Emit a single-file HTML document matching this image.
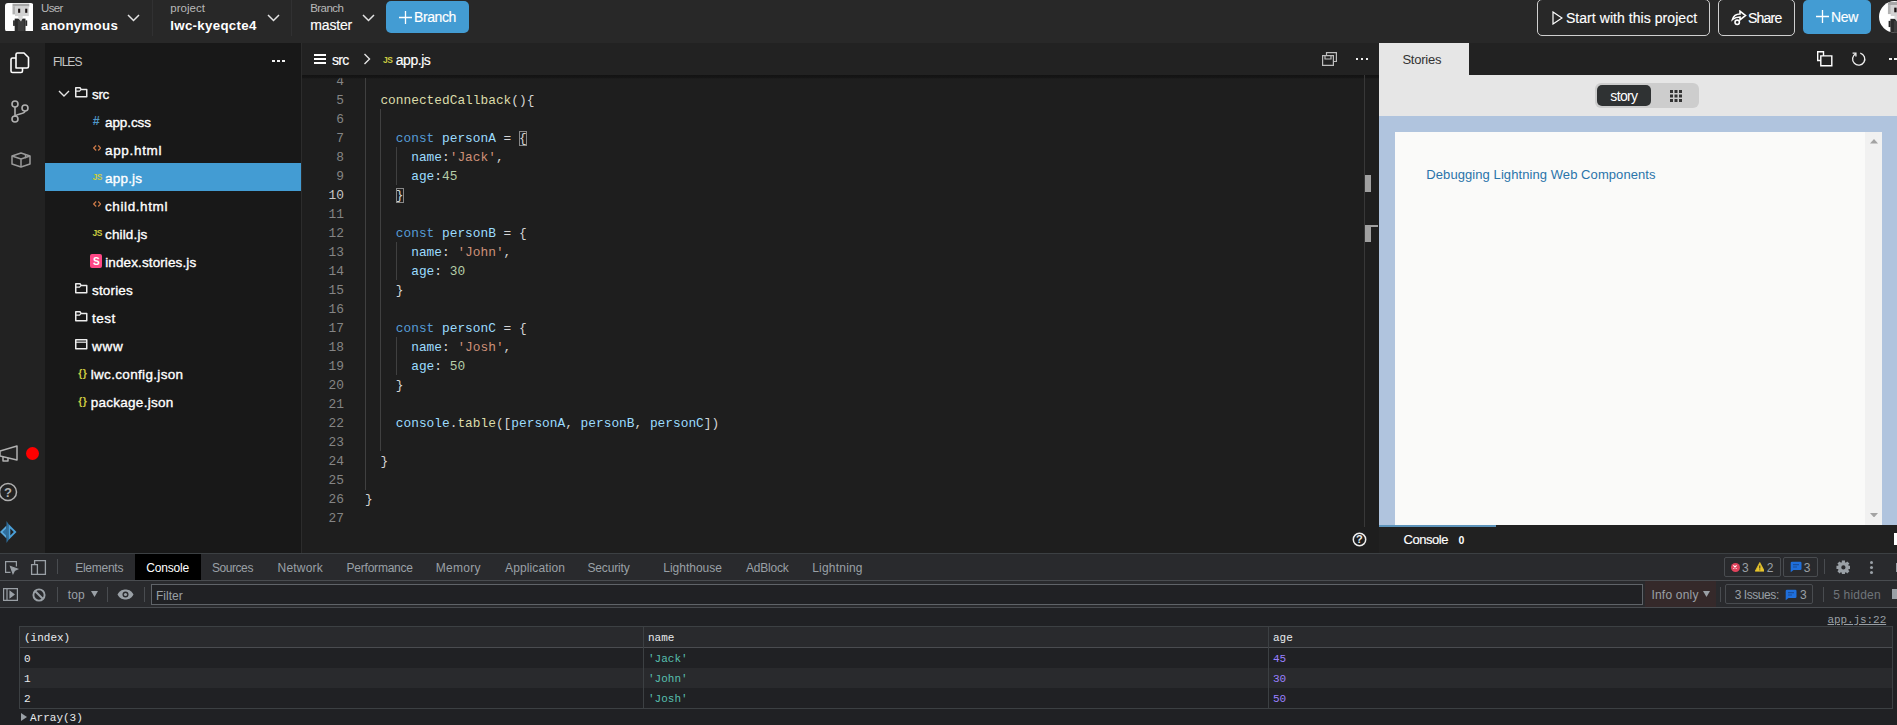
<!DOCTYPE html>
<html><head><meta charset="utf-8"><title>lwc-kyeqcte4</title>
<style>
*{box-sizing:border-box;margin:0;padding:0}
html,body{width:1897px;height:725px;overflow:hidden;background:#1e1e1e;font-family:"Liberation Sans",sans-serif;color:#fff}
.abs{position:absolute}
.tx{position:absolute;white-space:pre;line-height:1}
#top{position:absolute;left:0;top:0;width:1897px;height:43px;background:#282828}
#top .sep{position:absolute;top:0;width:1px;height:36px;background:#313132}
.btn{position:absolute;border-radius:5px}
.btn.blue{background:#439cd3}
.btn.out{border:1px solid #cfcfcf}
#iconbar{position:absolute;left:0;top:43px;width:45px;height:510px;background:#222}
#files{position:absolute;left:45px;top:43px;width:256px;height:510px;background:#181818}
#files .row{position:absolute;left:0;width:256px;height:28px}
#files .row.sel{background:#439cd3}
#split{position:absolute;left:301px;top:43px;width:1px;height:510px;background:#2c2c2c}
#editor{position:absolute;left:302px;top:43px;width:1077px;height:510px;background:#222}
#code{background:#1e1e1e;position:absolute;left:0;top:32px;width:1077px;height:478px;overflow:hidden;font-family:"Liberation Mono",monospace;font-size:12.83px;color:#d4d4d4}
#code .ln{position:absolute;left:0;width:42px;text-align:right;color:#858585;height:19px;line-height:19px}
#code .cl{position:absolute;left:63px;height:19px;line-height:19px;white-space:pre}
.k{color:#569cd6}.v{color:#9cdcfe}.s{color:#ce9178}.n{color:#b5cea8}.f{color:#dcdcaa}
.br{outline:1px solid #888;outline-offset:-1px}
.guide{position:absolute;width:1px;background:#404040}
#right{position:absolute;left:1379px;top:43px;width:518px;height:510px;background:#222}
#dev{position:absolute;left:0;top:553px;width:1897px;height:172px;background:#202124}
</style></head><body>
<div id="top">
<svg class="abs" style="left:4.900px;top:2.600px" width="28.500" height="28.800" viewBox="0 0 28.500 28.800"><rect width="28.500" height="28.800" rx="3" fill="#fff"/><rect x="7.500" y="0.700" width="16.800" height="2.900" fill="#a6a6a6"/><rect x="7.500" y="3.400" width="2.600" height="8" fill="#b2b2b2"/><rect x="10" y="3.400" width="13.800" height="9.700" fill="#d2d2d2"/><rect x="13.100" y="5.700" width="2.100" height="4.100" fill="#1c1414"/><rect x="20.200" y="5.700" width="2.100" height="4.100" fill="#1c1414"/><rect x="9.700" y="15.600" width="10.800" height="13.200" fill="#2a2a2a"/><rect x="8.100" y="17.400" width="1.800" height="5.500" fill="#2a2a2a"/><rect x="20.400" y="17.400" width="1.800" height="5.500" fill="#2a2a2a"/><rect x="12.800" y="17.500" width="6.600" height="11.300" fill="#3d3d3d"/><path d="M13.300 13.100h4.400v2.500l-1.700 2.800-2.700-3z" fill="#d8d8d8"/></svg>
<span id="t1" class="tx" style="left:40.94px;top:2.77px;font-size:11.5px;color:#b8b8b8;letter-spacing:-0.600px;">User</span>
<span id="t2" class="tx" style="left:41.00px;top:19.14px;font-size:13.3px;color:#fff;font-weight:bold;letter-spacing:0.270px;">anonymous</span>
<svg class="abs" style="left:127px;top:14px" width="13" height="8" viewBox="0 0 13 8"><path d="M1 1 L6.500 6.500 L12 1" fill="none" stroke="#e4e4e4" stroke-width="1.5"/></svg>
<div class="sep" style="left:152px"></div>
<span id="t3" class="tx" style="left:170.22px;top:2.77px;font-size:11.5px;color:#b8b8b8;letter-spacing:0.030px;">project</span>
<span id="t4" class="tx" style="left:170.22px;top:19.14px;font-size:13.3px;color:#fff;font-weight:bold;letter-spacing:0.311px;">lwc-kyeqcte4</span>
<svg class="abs" style="left:267px;top:14px" width="13" height="8" viewBox="0 0 13 8"><path d="M1 1 L6.500 6.500 L12 1" fill="none" stroke="#e4e4e4" stroke-width="1.5"/></svg>
<div class="sep" style="left:291px"></div>
<span id="t5" class="tx" style="left:310.22px;top:2.77px;font-size:11.5px;color:#b8b8b8;letter-spacing:-0.576px;">Branch</span>
<span id="t6" class="tx" style="left:310.22px;top:18.35px;font-size:14px;color:#fff;letter-spacing:-0.144px;-webkit-text-stroke:.15px #fff;">master</span>
<svg class="abs" style="left:362px;top:14px" width="13" height="8" viewBox="0 0 13 8"><path d="M1 1 L6.500 6.500 L12 1" fill="none" stroke="#e4e4e4" stroke-width="1.5"/></svg>
<div class="btn blue" style="left:386px;top:1px;width:83px;height:32px"></div>
<svg class="abs" style="left:399px;top:11px" width="13" height="13" viewBox="0 0 13 13"><path d="M6.500 0v13M0 6.500h13" stroke="#fff" stroke-width="1.3"/></svg>
<span id="t7" class="tx" style="left:414.10px;top:9.85px;font-size:14px;color:#fff;letter-spacing:-0.432px;-webkit-text-stroke:.15px #fff;">Branch</span>
<div class="btn out" style="left:1537px;top:-1px;width:173px;height:37px"></div>
<svg class="abs" style="left:1552px;top:11px" width="11" height="14" viewBox="0 0 11 14"><path d="M1 1 L10 7 L1 13 Z" fill="none" stroke="#fff" stroke-width="1.2"/></svg>
<span id="t8" class="tx" style="left:1565.94px;top:11.35px;font-size:14px;color:#fff;letter-spacing:0.057px;-webkit-text-stroke:.15px #fff;">Start with this project</span>
<div class="btn out" style="left:1718px;top:-1px;width:77px;height:37px"></div>
<svg class="abs" style="left:1731px;top:10px" width="16" height="16" viewBox="0 0 16 16" fill="none" stroke="#fff" stroke-width="1.600"><path d="M1.500 9.500C2.500 5.500 5.500 4 9 4V1.200L14.500 5.500 9 9.800V7C6 7 3.500 7.800 1.500 9.500Z"/><circle cx="6.200" cy="12.300" r="2.200"/></svg>
<span id="t9" class="tx" style="left:1748.00px;top:11.35px;font-size:14px;color:#fff;letter-spacing:-0.765px;-webkit-text-stroke:.15px #fff;">Share</span>
<div class="btn blue" style="left:1803px;top:0;width:68px;height:34px"></div>
<svg class="abs" style="left:1816px;top:10px" width="13" height="13" viewBox="0 0 13 13"><path d="M6.500 0v13M0 6.500h13" stroke="#fff" stroke-width="1.3"/></svg>
<span id="t10" class="tx" style="left:1830.88px;top:10.15px;font-size:14px;color:#fff;letter-spacing:-0.270px;-webkit-text-stroke:.15px #fff;">New</span>
<svg class="abs" style="left:1878.800px;top:1px" width="18.200" height="31.600" viewBox="0 0 16.100 28"><circle cx="14" cy="14" r="14" fill="#fff"/><clipPath id="cc"><circle cx="14" cy="14" r="14"/></clipPath><g clip-path="url(#cc)"><g transform="translate(0.400,0.200)"><rect x="7.500" y="0.700" width="16.800" height="2.900" fill="#a6a6a6"/><rect x="7.500" y="3.400" width="2.600" height="8" fill="#b2b2b2"/><rect x="10" y="3.400" width="13.800" height="9.700" fill="#d2d2d2"/><rect x="13.100" y="5.700" width="2.100" height="4.100" fill="#1c1414"/><rect x="20.200" y="5.700" width="2.100" height="4.100" fill="#1c1414"/><rect x="9.700" y="15.600" width="10.800" height="13.200" fill="#2a2a2a"/><rect x="8.100" y="17.400" width="1.800" height="5.500" fill="#2a2a2a"/><rect x="20.400" y="17.400" width="1.800" height="5.500" fill="#2a2a2a"/><rect x="12.800" y="17.500" width="6.600" height="11.300" fill="#3d3d3d"/><path d="M13.300 13.100h4.400v2.500l-1.700 2.800-2.700-3z" fill="#d8d8d8"/></g></g></svg>
</div>
<div id="iconbar">
  <svg class="abs" style="left:8px;top:8px" width="24" height="24" viewBox="0 0 24 24" fill="none" stroke="#fff" stroke-width="1.6" stroke-linejoin="round"><path d="M8 17V3.500a1.500 1.500 0 0 1 1.500-1.500H16l4.500 4.500V15.500a1.500 1.500 0 0 1-1.500 1.500H8Z"/><path d="M8 7H4.500A1.500 1.500 0 0 0 3 8.500V20a1.500 1.500 0 0 0 1.500 1.500H13a1.500 1.500 0 0 0 1.500-1.500v-3"/></svg>
  <svg class="abs" style="left:8px;top:55.500px" width="24" height="26" viewBox="0 0 24 26" fill="none" stroke="#b0b0b0" stroke-width="1.6"><circle cx="7" cy="5" r="3"/><circle cx="7" cy="20" r="3"/><circle cx="17" cy="9" r="3"/><path d="M7 8v9M17 12c0 4-10 2-10 6"/></svg>
  <svg class="abs" style="left:10.500px;top:108.500px" width="20" height="16" viewBox="0 0 20 16" fill="none" stroke="#9a9a9a" stroke-width="1.500" stroke-linejoin="round"><path d="M1 4 L10 1 L19 4 V12 L10 15 L1 12 Z"/><path d="M1 4 L10 7 L19 4M10 7V15M14.500 2.500v4"/></svg>
  <svg class="abs" style="left:0;top:400px" width="20" height="20" viewBox="0 0 20 20" fill="none" stroke="#b0b0b0" stroke-width="1.5" stroke-linejoin="round"><path d="M0 8 L17 3 V17 L0 13 Z"/><path d="M3 14v4h5v-3"/></svg>
  <div class="abs" style="left:26px;top:404px;width:13px;height:13px;border-radius:7px;background:#f00"></div>
  <svg class="abs" style="left:-2px;top:439px" width="20" height="20" viewBox="0 0 20 20" fill="none" stroke="#b0b0b0" stroke-width="1.5"><circle cx="10" cy="10" r="8.500"/></svg>
  <svg class="abs" style="left:0;top:478px" width="18" height="22" viewBox="0 0 18 22"><path d="M0 11 L6.500 4.500 V17.500Z" fill="#5aa9dc"/><path d="M2.500 11 L6.500 7 V15Z" fill="#2f6f9f"/><path d="M6.500 0 L8.500 3 V19 L6.500 22Z" fill="#2d6e9e"/><path d="M8.500 3 L16.500 11 L8.500 19 Z" fill="#4a9fd8"/><path d="M10.300 7.500 L13.800 11 L10.300 14.500Z" fill="#222"/></svg>
</div>
<span id="q1" class="tx" style="left:4.00px;top:486.00px;font-size:13px;color:#b0b0b0;font-weight:bold;">?</span>
<div id="files">
  <div class="row" style="top:36px"></div>
  <div class="row" style="top:64px"></div>
  <div class="row" style="top:92px"></div>
  <div class="row sel" style="top:120px"></div>
  <div class="row" style="top:148px"></div>
  <div class="row" style="top:176px"></div>
  <div class="row" style="top:204px"></div>
  <div class="row" style="top:232px"></div>
  <div class="row" style="top:260px"></div>
  <div class="row" style="top:288px"></div>
  <div class="row" style="top:316px"></div>
  <div class="row" style="top:344px"></div>
</div>
<span id="t30" class="tx" style="left:53.00px;top:55.84px;font-size:12px;color:#c4c4c4;letter-spacing:-0.990px;">FILES</span>
<div class="abs" style="left:272.300px;top:59.700px;width:2.500px;height:2.500px;background:#f0f0f0;box-shadow:5px 0 0 #f0f0f0,10px 0 0 #f0f0f0"></div>
<svg class="abs" style="left:58px;top:90px" width="12" height="8" viewBox="0 0 12 8"><path d="M1 1 L6 6 L11 1" fill="none" stroke="#e4e4e4" stroke-width="1.4"/></svg>
<svg class="abs" style="left:75.2px;top:87.4px" width="12.500" height="10.500" viewBox="0 0 12.500 10.500" fill="none" stroke="#ececec" stroke-width="1.500" stroke-linejoin="round"><path d="M0.750 0.750H5L6.200 2.600H11.750V9.750H0.750Z"/><path d="M1 4.100H4.600L5.800 2.700" stroke-width="1.200"/></svg>
<span id="t12" class="tx" style="left:92.00px;top:87.57px;font-size:13.5px;color:#fff;letter-spacing:-0.360px;-webkit-text-stroke:.35px #fff;">src</span>
<span id="i107" class="tx" style="left:92.80px;top:115.42px;font-size:12.5px;color:#4f97c8;font-weight:bold;">#</span>
<span id="t14" class="tx" style="left:105.00px;top:115.57px;font-size:13.5px;color:#fff;letter-spacing:-0.090px;-webkit-text-stroke:.35px #fff;">app.css</span>
<svg class="abs" style="left:93px;top:145px" width="8.400" height="6" viewBox="0 0 8.400 6" fill="none" stroke="#cc7a48" stroke-width="1.200"><path d="M3.200 0.500L0.700 3 3.200 5.500M5.200 0.500L7.700 3 5.200 5.500"/></svg>
<span id="t15" class="tx" style="left:105.00px;top:143.57px;font-size:13.5px;color:#fff;letter-spacing:0.669px;-webkit-text-stroke:.35px #fff;">app.html</span>
<span id="i163" class="tx" style="left:92.60px;top:173.30px;font-size:8.5px;color:#cbcb41;font-weight:bold;letter-spacing:-.6px;">JS</span>
<span id="t17" class="tx" style="left:105.08px;top:171.57px;font-size:13.5px;color:#fff;letter-spacing:0.180px;-webkit-text-stroke:.35px #fff;">app.js</span>
<svg class="abs" style="left:93px;top:201px" width="8.400" height="6" viewBox="0 0 8.400 6" fill="none" stroke="#cc7a48" stroke-width="1.200"><path d="M3.200 0.500L0.700 3 3.200 5.500M5.200 0.500L7.700 3 5.200 5.500"/></svg>
<span id="t18" class="tx" style="left:105.00px;top:199.57px;font-size:13.5px;color:#fff;letter-spacing:0.600px;-webkit-text-stroke:.35px #fff;">child.html</span>
<span id="i219" class="tx" style="left:92.60px;top:229.30px;font-size:8.5px;color:#cbcb41;font-weight:bold;letter-spacing:-.6px;">JS</span>
<span id="t20" class="tx" style="left:105.00px;top:227.57px;font-size:13.5px;color:#fff;letter-spacing:0.154px;-webkit-text-stroke:.35px #fff;">child.js</span>
<span class="abs" style="left:90px;top:254px;width:12px;height:14px;border-radius:2px;background:#ff4785"></span><span id="i247" class="tx" style="left:93.00px;top:257.04px;font-size:10px;color:#fff;font-weight:bold;">S</span>
<span id="t22" class="tx" style="left:105.28px;top:255.57px;font-size:13.5px;color:#fff;letter-spacing:0.108px;-webkit-text-stroke:.35px #fff;">index.stories.js</span>
<svg class="abs" style="left:75.2px;top:283.4px" width="12.500" height="10.500" viewBox="0 0 12.500 10.500" fill="none" stroke="#ececec" stroke-width="1.500" stroke-linejoin="round"><path d="M0.750 0.750H5L6.200 2.600H11.750V9.750H0.750Z"/><path d="M1 4.100H4.600L5.800 2.700" stroke-width="1.200"/></svg>
<span id="t23" class="tx" style="left:92.06px;top:283.57px;font-size:13.5px;color:#fff;letter-spacing:0.150px;-webkit-text-stroke:.35px #fff;">stories</span>
<svg class="abs" style="left:75.2px;top:311.4px" width="12.500" height="10.500" viewBox="0 0 12.500 10.500" fill="none" stroke="#ececec" stroke-width="1.500" stroke-linejoin="round"><path d="M0.750 0.750H5L6.200 2.600H11.750V9.750H0.750Z"/><path d="M1 4.100H4.600L5.800 2.700" stroke-width="1.200"/></svg>
<span id="t24" class="tx" style="left:92.06px;top:311.57px;font-size:13.5px;color:#fff;letter-spacing:0.480px;-webkit-text-stroke:.35px #fff;">test</span>
<svg class="abs" style="left:75.2px;top:339.4px" width="12.500" height="10.500" viewBox="0 0 12.500 10.500" fill="none" stroke="#ececec" stroke-width="1.500" stroke-linejoin="round"><path d="M0.750 0.750H11.750V9.750H0.750Z"/><path d="M0.750 3.200H11.750" stroke-width="1.200"/></svg>
<span id="t25" class="tx" style="left:92.06px;top:339.57px;font-size:13.5px;color:#fff;letter-spacing:0.720px;-webkit-text-stroke:.35px #fff;">www</span>
<span id="i359" class="tx" style="left:78.20px;top:368.11px;font-size:10.5px;color:#cbcb41;font-weight:bold;letter-spacing:.6px;">{}</span>
<span id="t27" class="tx" style="left:90.66px;top:367.57px;font-size:13.5px;color:#fff;letter-spacing:0.334px;-webkit-text-stroke:.35px #fff;">lwc.config.json</span>
<span id="i387" class="tx" style="left:78.20px;top:396.11px;font-size:10.5px;color:#cbcb41;font-weight:bold;letter-spacing:.6px;">{}</span>
<span id="t29" class="tx" style="left:90.66px;top:395.57px;font-size:13.5px;color:#fff;letter-spacing:0.278px;-webkit-text-stroke:.35px #fff;">package.json</span>
<div id="split"></div>
<div id="editor">
  <div id="code">
    <div class="ln" style="top:-3px">4</div><div class="cl" style="top:-3px"> </div>
    <div class="ln" style="top:16px">5</div><div class="cl" style="top:16px">  <span class="f">connectedCallback</span>(){</div>
    <div class="ln" style="top:35px">6</div><div class="cl" style="top:35px"> </div>
    <div class="ln" style="top:54px">7</div><div class="cl" style="top:54px">    <span class="k">const</span> <span class="v">personA</span> = <span class="br">{</span></div>
    <div class="ln" style="top:73px">8</div><div class="cl" style="top:73px">      <span class="v">name</span>:<span class="s">'Jack'</span>,</div>
    <div class="ln" style="top:92px">9</div><div class="cl" style="top:92px">      <span class="v">age</span>:<span class="n">45</span></div>
    <div class="ln" style="top:111px;color:#c6c6c6">10</div><div class="cl" style="top:111px">    <span class="br">}</span></div>
    <div class="ln" style="top:130px">11</div><div class="cl" style="top:130px"> </div>
    <div class="ln" style="top:149px">12</div><div class="cl" style="top:149px">    <span class="k">const</span> <span class="v">personB</span> = {</div>
    <div class="ln" style="top:168px">13</div><div class="cl" style="top:168px">      <span class="v">name</span>: <span class="s">'John'</span>,</div>
    <div class="ln" style="top:187px">14</div><div class="cl" style="top:187px">      <span class="v">age</span>: <span class="n">30</span></div>
    <div class="ln" style="top:206px">15</div><div class="cl" style="top:206px">    }</div>
    <div class="ln" style="top:225px">16</div><div class="cl" style="top:225px"> </div>
    <div class="ln" style="top:244px">17</div><div class="cl" style="top:244px">    <span class="k">const</span> <span class="v">personC</span> = {</div>
    <div class="ln" style="top:263px">18</div><div class="cl" style="top:263px">      <span class="v">name</span>: <span class="s">'Josh'</span>,</div>
    <div class="ln" style="top:282px">19</div><div class="cl" style="top:282px">      <span class="v">age</span>: <span class="n">50</span></div>
    <div class="ln" style="top:301px">20</div><div class="cl" style="top:301px">    }</div>
    <div class="ln" style="top:320px">21</div><div class="cl" style="top:320px"> </div>
    <div class="ln" style="top:339px">22</div><div class="cl" style="top:339px">    <span class="v">console</span>.<span class="f">table</span>([<span class="v">personA</span>, <span class="v">personB</span>, <span class="v">personC</span>])</div>
    <div class="ln" style="top:358px">23</div><div class="cl" style="top:358px"> </div>
    <div class="ln" style="top:377px">24</div><div class="cl" style="top:377px">  }</div>
    <div class="ln" style="top:396px">25</div><div class="cl" style="top:396px"> </div>
    <div class="ln" style="top:415px">26</div><div class="cl" style="top:415px">}</div>
    <div class="ln" style="top:434px">27</div><div class="cl" style="top:434px"> </div>
    <div class="abs" style="left:0;top:0;width:1077px;height:3.500px;background:linear-gradient(#131313,#151515 60%,rgba(30,30,30,0))"></div>
    <div class="guide" style="left:63px;top:3px;height:411.500px"></div>
    <div class="guide" style="left:78px;top:34px;height:342px"></div>
    <div class="guide" style="left:94px;top:72px;height:38px"></div>
    <div class="guide" style="left:94px;top:167px;height:38px"></div>
    <div class="guide" style="left:94px;top:262px;height:38px"></div>
    <div class="abs" style="left:1062px;top:0;width:1px;height:452px;background:#383838"></div>
    <div class="abs" style="left:1063px;top:100px;width:6px;height:17px;background:#a0a0a0"></div>
    <div class="abs" style="left:1063px;top:150px;width:6px;height:17px;background:#a0a0a0"></div>
    <div class="abs" style="left:1063px;top:150px;width:13px;height:2px;background:#a0a0a0"></div>
    <svg class="abs" style="left:1050px;top:457px" width="15" height="15" viewBox="0 0 15 15"><circle cx="7.500" cy="7.500" r="6.200" fill="none" stroke="#eee" stroke-width="1.500"/></svg>
  </div>
</div>
<span id="q2" class="tx" style="left:1356.00px;top:534.29px;font-size:11px;color:#eee;font-weight:bold;">?</span>
<div class="abs" style="left:314px;top:54px;width:12px;height:2px;background:#fff;box-shadow:0 4px 0 #fff,0 8px 0 #fff"></div>
<span id="t32" class="tx" style="left:332.00px;top:52.65px;font-size:14px;color:#fff;letter-spacing:-0.720px;-webkit-text-stroke:.15px #fff;">src</span>
<svg class="abs" style="left:363px;top:53px" width="8" height="12" viewBox="0 0 8 12"><path d="M1.500 1 L6.500 6 L1.500 11" fill="none" stroke="#e4e4e4" stroke-width="1.400"/></svg>
<span id="ijs" class="tx" style="left:383.00px;top:55.80px;font-size:8.5px;color:#cbcb41;font-weight:bold;letter-spacing:-.6px;">JS</span>
<span id="t34" class="tx" style="left:395.78px;top:52.65px;font-size:14px;color:#fff;letter-spacing:-0.468px;-webkit-text-stroke:.15px #fff;">app.js</span>
<svg class="abs" style="left:1322px;top:52px" width="16" height="14" viewBox="0 0 16 14" fill="none" stroke="#bdbdbd" stroke-width="1.200"><path d="M4.500 3.500V0.600h9.900v8.900h-3"/><path d="M0.600 3.600h10.800v9.800h-10.800z"/><path d="M3 3.600v3.400h6v-3.400"/></svg>
<div class="abs" style="left:1355.700px;top:57.700px;width:2.500px;height:2.500px;background:#f0f0f0;box-shadow:5px 0 0 #f0f0f0,10px 0 0 #f0f0f0"></div>
<div id="right">
  <div class="abs" style="left:0;top:0;width:90px;height:32px;background:#e6e6e6"></div>
  <svg class="abs" style="left:438.300px;top:8.300px" width="16" height="16" viewBox="0 0 16 16" fill="none" stroke="#fff" stroke-width="1.400"><path d="M0.700 0.700h5.800v8.800h-5.800z"/><path d="M3.800 4.900h11v9.800h-11z" fill="#222"/></svg>
  <svg class="abs" style="left:472px;top:8px" width="16" height="16" viewBox="0 0 16 16" fill="none" stroke="#f0f0f0" stroke-width="1.300"><path d="M9.280 2.100A6.100 6.100 0 1 1 4.650 2.700"/><path d="M1.600 2.200H4.900V5.500"/></svg>
  <div class="abs" style="left:510px;top:14.700px;width:2.500px;height:2.500px;background:#f0f0f0;box-shadow:5px 0 0 #f0f0f0"></div>
  <div class="abs" style="left:0;top:32px;width:518px;height:41px;background:#e6e6e6"></div>
  <div class="abs" style="left:216px;top:40px;width:104px;height:25px;border-radius:6px;background:#cdcdcd"></div>
  <div class="abs" style="left:218px;top:42px;width:54px;height:21px;border-radius:5px;background:#2f3233"></div>
  <svg class="abs" style="left:291px;top:47px" width="12" height="12" viewBox="0 0 12 12" fill="#333"><path d="M0 0h3v3h-3zM4.500 0h3v3h-3zM9 0h3v3h-3zM0 4.500h3v3h-3zM4.500 4.500h3v3h-3zM9 4.500h3v3h-3zM0 9h3v3h-3zM4.500 9h3v3h-3zM9 9h3v3h-3z"/></svg>
  <div class="abs" style="left:0;top:73px;width:518px;height:409px;background:#b0c4de"></div>
  <div class="abs" style="left:16px;top:89px;width:487px;height:393px;background:#fafaf9"></div>
  <div class="abs" style="left:486px;top:89px;width:17px;height:393px;background:#f1f1f1"></div>
  <svg class="abs" style="left:490.500px;top:96px" width="8" height="4.500" viewBox="0 0 8 4.500"><path d="M0 4.500 L4 0 L8 4.500Z" fill="#a3a3a3"/></svg>
  <svg class="abs" style="left:490.500px;top:469.500px" width="8" height="4.500" viewBox="0 0 8 4.500"><path d="M0 0 L4 4.500 L8 0Z" fill="#a3a3a3"/></svg>
  <div class="abs" style="left:0;top:482px;width:518px;height:28px;background:#212121"></div>
  <div class="abs" style="left:0;top:482px;width:117px;height:2px;background:#5d94bb"></div>
  <div class="abs" style="left:515px;top:490px;width:3px;height:12px;background:#fff"></div>
</div>
<span id="t35" class="tx" style="left:1402.38px;top:52.80px;font-size:13px;color:#333;letter-spacing:-0.240px;">Stories</span>
<span id="t36" class="tx" style="left:1610.28px;top:88.85px;font-size:14px;color:#fff;letter-spacing:-0.630px;">story</span>
<span id="t37" class="tx" style="left:1426.32px;top:167.70px;font-size:13px;color:#2a74aa;letter-spacing:0.076px;">Debugging Lightning Web Components</span>
<span id="t38" class="tx" style="left:1403.48px;top:532.70px;font-size:13px;color:#fff;letter-spacing:-0.450px;-webkit-text-stroke:.15px #fff;">Console</span>
<span id="t39" class="tx" style="left:1458.50px;top:534.81px;font-size:10.5px;color:#fff;font-weight:bold;">0</span>
<div id="dev">
  <div class="abs" style="left:0;top:0;width:1897px;height:1px;background:#3c4043"></div>
  <div class="abs" style="left:0;top:1px;width:1897px;height:26px;background:#292a2d"></div>
  <div class="abs" style="left:0;top:27px;width:1897px;height:1px;background:#494c50"></div>
  <div class="abs" style="left:0;top:28px;width:1897px;height:26px;background:#292a2d"></div>
  <div class="abs" style="left:0;top:54px;width:1897px;height:1px;background:#494c50"></div>
  <div class="abs" style="left:135px;top:1px;width:66px;height:26px;background:#000"></div>
  <svg class="abs" style="left:5px;top:8px" width="14" height="14" viewBox="0 0 14 14" fill="none" stroke="#9aa0a6" stroke-width="1.200"><path d="M5.500 11.400H0.600V0.600H11.400V5.500"/><path d="M5.500 5.500 L12.500 8 L9.500 9.500 L8 12.500Z" fill="#9aa0a6"/></svg>
  <svg class="abs" style="left:30px;top:6px" width="17" height="17" viewBox="0 0 17 17" fill="none" stroke="#9aa0a6" stroke-width="1.300"><path d="M4.600 5V1.600h10.800v13.800H8"/><path d="M1.600 5.600h5.800v9.800H1.600z" fill="#292a2d"/></svg>
  <div class="abs" style="left:57px;top:6px;width:1px;height:15px;background:#494c50"></div>
  <div class="abs" style="left:1724px;top:4px;width:57px;height:20px;border:1px solid #494c50;border-radius:2px"></div>
  <div class="abs" style="left:1730.700px;top:9.500px;width:9.400px;height:9.400px;border-radius:5px;background:#e0435c"></div>
  <svg class="abs" style="left:1733.400px;top:12.200px" width="4" height="4" viewBox="0 0 4 4"><path d="M0.400 0.400L3.600 3.600M3.600 0.400L0.400 3.600" stroke="#fff" stroke-width="1.100"/></svg>
  <svg class="abs" style="left:1754.700px;top:9.300px" width="9.600" height="9.600" viewBox="0 0 11 11"><path d="M5.500 0.500 L10.800 10.500 H0.200Z" fill="#e8c52c" stroke="#e8c52c" stroke-width="0.800" stroke-linejoin="round"/><path d="M5.500 4v3.500M5.500 8.500v1" stroke="#202124" stroke-width="1.100"/></svg>
  <div class="abs" style="left:1783px;top:4px;width:35px;height:20px;border:1px solid #494c50;border-radius:2px"></div>
  <svg class="abs" style="left:1790px;top:8px" width="12" height="12" viewBox="0 0 12 12"><path d="M2 0.800h8.200a1.300 1.300 0 0 1 1.300 1.300v5.600a1.300 1.300 0 0 1-1.300 1.300H3.500L0.700 11.300V2.100A1.300 1.300 0 0 1 2 0.800z" fill="#1f6fdb"/><path d="M3 3.600h6M3 6h4" stroke="#1a4f9c" stroke-width="1.100"/></svg>
  <div class="abs" style="left:1824px;top:6px;width:1px;height:15px;background:#494c50"></div>
  <svg class="abs" style="left:1835.600px;top:6.600px" width="14.800" height="14.800" viewBox="0 0 16 16"><circle cx="8" cy="8" r="4.100" fill="none" stroke="#9aa0a6" stroke-width="3.600"/><g stroke="#9aa0a6" stroke-width="3.400"><path d="M8 0.500v3M8 12.500v3M0.500 8h3M12.500 8h3M2.700 2.700l2 2M11.300 11.300l2 2M2.700 13.300l2-2M11.300 4.700l2-2"/></g></svg>
  <div class="abs" style="left:1870px;top:8px;width:3px;height:3px;border-radius:2px;background:#9aa0a6;box-shadow:0 5px 0 #9aa0a6,0 10px 0 #9aa0a6"></div>
  <div class="abs" style="left:1895.500px;top:10px;width:1.500px;height:9px;background:#9aa0a6"></div>
  <svg class="abs" style="left:3px;top:35px" width="15" height="13" viewBox="0 0 15 13" fill="none" stroke="#9aa0a6" stroke-width="1.200"><path d="M0.600 0.600h13.800v11.800h-13.800z"/><path d="M4 0.600v11.800"/><path d="M7 3.500 L11 6.500 L7 9.500Z" fill="#9aa0a6"/></svg>
  <svg class="abs" style="left:32px;top:35px" width="14" height="14" viewBox="0 0 14 14" fill="none" stroke="#9aa0a6" stroke-width="1.900"><circle cx="7" cy="7" r="5.600"/><path d="M3 3 L11 11"/></svg>
  <div class="abs" style="left:57px;top:34px;width:1px;height:15px;background:#494c50"></div>
  <svg class="abs" style="left:91px;top:38px" width="7" height="6" viewBox="0 0 7 6"><path d="M0 0h7L3.500 6Z" fill="#9aa0a6"/></svg>
  <div class="abs" style="left:107px;top:34px;width:1px;height:15px;background:#494c50"></div>
  <svg class="abs" style="left:117px;top:36px" width="17" height="11" viewBox="0 0 17 11"><path d="M0.500 5.500C3 1 6 0.500 8.500 0.500S14 1 16.500 5.500C14 10 11 10.500 8.500 10.500S3 10 0.500 5.500Z" fill="#9aa0a6"/><circle cx="8.500" cy="5.500" r="3" fill="#292a2d"/><circle cx="8.500" cy="5.500" r="1.600" fill="#9aa0a6"/></svg>
  <div class="abs" style="left:144px;top:34px;width:1px;height:15px;background:#494c50"></div>
  <div class="abs" style="left:151px;top:31px;width:1492px;height:21px;background:#202124;border:1px solid #5f6368"></div>
  <div class="abs" style="left:1645px;top:28px;width:71px;height:26px;background:#35292a"></div>
  <svg class="abs" style="left:1703px;top:38px" width="7" height="6" viewBox="0 0 7 6"><path d="M0 0h7L3.500 6Z" fill="#9aa0a6"/></svg>
  <div class="abs" style="left:1720px;top:34px;width:1px;height:15px;background:#494c50"></div>
  <div class="abs" style="left:1725px;top:31px;width:88px;height:20px;border:1px solid #494c50;border-radius:2px"></div>
  <svg class="abs" style="left:1785px;top:36px" width="12" height="12" viewBox="0 0 12 12"><path d="M2 0.800h8.200a1.300 1.300 0 0 1 1.300 1.300v5.600a1.300 1.300 0 0 1-1.300 1.300H3.500L0.700 11.300V2.100A1.300 1.300 0 0 1 2 0.800z" fill="#1f6fdb"/><path d="M3 3.600h6M3 6h4" stroke="#1a4f9c" stroke-width="1.100"/></svg>
  <div class="abs" style="left:1823px;top:34px;width:1px;height:15px;background:#494c50"></div>
  <div class="abs" style="left:1892px;top:36px;width:5px;height:10px;background:#9aa0a6"></div>
  <div class="abs" style="left:19px;top:73px;width:1874px;height:83px;border:1px solid #3c4043;background:#202124"></div>
  <div class="abs" style="left:20px;top:74px;width:1872px;height:20px;background:#292a2d"></div>
  <div class="abs" style="left:20px;top:94px;width:1872px;height:1px;background:#4a4c50"></div>
  <div class="abs" style="left:20px;top:115px;width:1872px;height:20px;background:#292a2d"></div>
  <div class="abs" style="left:643px;top:74px;width:1px;height:81px;background:#3c4043"></div>
  <div class="abs" style="left:1268px;top:74px;width:1px;height:81px;background:#3c4043"></div>
  <svg class="abs" style="left:21px;top:160px" width="6" height="8" viewBox="0 0 6 8"><path d="M0 0v8l6-4z" fill="#9aa0a6"/></svg>
</div>
<span id="t40" class="tx" style="left:75.16px;top:562.14px;font-size:12px;color:#9aa0a6;letter-spacing:-0.257px;">Elements</span>
<span id="t41" class="tx" style="left:146.16px;top:562.14px;font-size:12px;color:#fff;letter-spacing:-0.180px;">Console</span>
<span id="t42" class="tx" style="left:211.88px;top:562.14px;font-size:12px;color:#9aa0a6;letter-spacing:-0.420px;">Sources</span>
<span id="t43" class="tx" style="left:277.50px;top:562.14px;font-size:12px;color:#9aa0a6;letter-spacing:0.210px;">Network</span>
<span id="t44" class="tx" style="left:346.50px;top:562.14px;font-size:12px;color:#9aa0a6;letter-spacing:-0.216px;">Performance</span>
<span id="t45" class="tx" style="left:435.66px;top:562.14px;font-size:12px;color:#9aa0a6;letter-spacing:0.324px;">Memory</span>
<span id="t46" class="tx" style="left:505.06px;top:562.14px;font-size:12px;color:#9aa0a6;letter-spacing:0.126px;">Application</span>
<span id="t47" class="tx" style="left:587.38px;top:562.14px;font-size:12px;color:#9aa0a6;letter-spacing:-0.129px;">Security</span>
<span id="t48" class="tx" style="left:663.22px;top:562.14px;font-size:12px;color:#9aa0a6;letter-spacing:0.000px;">Lighthouse</span>
<span id="t49" class="tx" style="left:746.06px;top:562.14px;font-size:12px;color:#9aa0a6;letter-spacing:-0.210px;">AdBlock</span>
<span id="t50" class="tx" style="left:812.22px;top:562.14px;font-size:12px;color:#9aa0a6;letter-spacing:0.202px;">Lightning</span>
<span id="t51" class="tx" style="left:1741.94px;top:562.14px;font-size:12px;color:#9aa0a6;">3</span>
<span id="t52" class="tx" style="left:1766.66px;top:562.14px;font-size:12px;color:#9aa0a6;">2</span>
<span id="t53" class="tx" style="left:1803.66px;top:562.14px;font-size:12px;color:#9aa0a6;">3</span>
<span id="t54" class="tx" style="left:67.84px;top:588.84px;font-size:12px;color:#9aa0a6;letter-spacing:0.090px;">top</span>
<span id="t55" class="tx" style="left:155.88px;top:589.64px;font-size:12px;color:#9aa0a6;letter-spacing:0.036px;">Filter</span>
<span id="t56" class="tx" style="left:1651.44px;top:588.84px;font-size:12px;color:#9aa0a6;letter-spacing:0.203px;">Info only</span>
<span id="t57" class="tx" style="left:1734.66px;top:588.84px;font-size:12px;color:#9aa0a6;letter-spacing:-0.428px;">3 Issues:</span>
<span id="t58" class="tx" style="left:1800.00px;top:588.84px;font-size:12px;color:#9aa0a6;">3</span>
<span id="t59" class="tx" style="left:1833.16px;top:588.84px;font-size:12px;color:#70757a;letter-spacing:0.206px;">5 hidden</span>
<span id="t60" class="tx" style="left:1827.56px;top:614.87px;font-size:11px;color:#9aa0a6;font-family:'Liberation Mono',monospace;letter-spacing:-0.090px;text-decoration:underline;">app.js:22</span>
<span id="c24_641" class="tx" style="left:24.00px;top:632.87px;font-size:11px;color:#e8eaed;font-family:'Liberation Mono',monospace;">(index)</span>
<span id="c648_641" class="tx" style="left:648.00px;top:632.87px;font-size:11px;color:#e8eaed;font-family:'Liberation Mono',monospace;">name</span>
<span id="c1273_641" class="tx" style="left:1273.00px;top:632.87px;font-size:11px;color:#e8eaed;font-family:'Liberation Mono',monospace;">age</span>
<span id="c24_662" class="tx" style="left:24.00px;top:653.87px;font-size:11px;color:#e8eaed;font-family:'Liberation Mono',monospace;">0</span>
<span id="c648_662" class="tx" style="left:648.00px;top:653.87px;font-size:11px;color:#57bfae;font-family:'Liberation Mono',monospace;">'Jack'</span>
<span id="c1273_662" class="tx" style="left:1273.00px;top:653.87px;font-size:11px;color:#9980ff;font-family:'Liberation Mono',monospace;">45</span>
<span id="c24_682" class="tx" style="left:24.00px;top:673.87px;font-size:11px;color:#e8eaed;font-family:'Liberation Mono',monospace;">1</span>
<span id="c648_682" class="tx" style="left:648.00px;top:673.87px;font-size:11px;color:#57bfae;font-family:'Liberation Mono',monospace;">'John'</span>
<span id="c1273_682" class="tx" style="left:1273.00px;top:673.87px;font-size:11px;color:#9980ff;font-family:'Liberation Mono',monospace;">30</span>
<span id="c24_702" class="tx" style="left:24.00px;top:693.87px;font-size:11px;color:#e8eaed;font-family:'Liberation Mono',monospace;">2</span>
<span id="c648_702" class="tx" style="left:648.00px;top:693.87px;font-size:11px;color:#57bfae;font-family:'Liberation Mono',monospace;">'Josh'</span>
<span id="c1273_702" class="tx" style="left:1273.00px;top:693.87px;font-size:11px;color:#9980ff;font-family:'Liberation Mono',monospace;">50</span>
<span id="c30_721" class="tx" style="left:30.00px;top:712.87px;font-size:11px;color:#e8eaed;font-family:'Liberation Mono',monospace;">Array(3)</span>
</body></html>
